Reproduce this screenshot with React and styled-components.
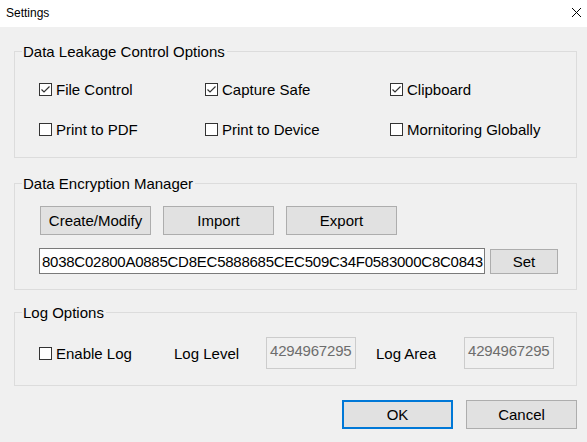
import React from "react";
import styled, { createGlobalStyle } from "styled-components";

const Global = createGlobalStyle`
  html, body { margin: 0; padding: 0; background: #f0f0f0; }
  body { font-family: "Liberation Sans", Arial, sans-serif; }
  * { box-sizing: border-box; }
`;

const Window = styled.div`
  width: 587px;
  height: 442px;
  background: #f0f0f0;
  display: flex;
  flex-direction: column;
  font-family: "Liberation Sans", Arial, sans-serif;
  font-size: 15px;
  color: #000;
  overflow: hidden;
`;

const TitleBar = styled.div`
  height: 27px;
  background: #fff;
  display: flex;
  align-items: center;
  justify-content: space-between;
  padding: 0 4px 1px 6px;
  font-size: 12px;
`;

const Body = styled.div`
  display: flex;
  flex-direction: column;
  padding: 16px 10px 0 14px;
`;

const Group = styled.fieldset`
  margin: ${(p) => p.$mt || 0}px 0 0 0;
  padding: ${(p) => p.$pt}px 0 ${(p) => p.$pb}px 24px;
  border: 1px solid #dcdcdc;
  min-width: 0;
`;

const Legend = styled.legend`
  padding: 0 2px 0 1px;
  margin-left: -17px;
  line-height: 17px;
  font-size: 15px;
`;

const OptionGrid = styled.div`
  display: grid;
  grid-template-columns: 166px 185px auto;
  row-gap: 20px;
`;

const Check = styled.label`
  display: flex;
  align-items: center;
  gap: 4px;
  height: 20px;
  white-space: nowrap;
`;

const Box = styled.span`
  width: 13px;
  height: 13px;
  border: 1px solid #333;
  background: #fff;
  display: inline-flex;
  flex: none;
`;

const CheckBox = ({ checked, children }) => (
  <Check>
    <Box>
      {checked && (
        <svg width="11" height="11" viewBox="0 0 11 11">
          <polyline points="1.5,5.5 4,8 9.5,2.5" fill="none" stroke="#333" strokeWidth="1.2" />
        </svg>
      )}
    </Box>
    {children}
  </Check>
);

const ButtonRow = styled.div`
  display: flex;
  gap: 12px;
  padding-left: 1px;
`;

const Button = styled.button`
  width: ${(p) => p.$w || 111}px;
  height: ${(p) => p.$h || 29}px;
  background: #e1e1e1;
  border: ${(p) => (p.$default ? "2px solid #0078d7" : "1px solid #adadad")};
  font-family: "Liberation Sans", Arial, sans-serif;
  font-size: 15px;
  color: #000;
  padding: 0;
  margin: 0;
`;

const KeyRow = styled.div`
  display: flex;
  align-items: center;
  gap: 5px;
  margin-top: 13px;
`;

const KeyInput = styled.div`
  width: 446px;
  height: 26px;
  border: 1px solid #7a7a7a;
  background: #fff;
  padding: 0 0 0 2px;
  display: flex;
  align-items: center;
  white-space: nowrap;
  overflow: hidden;
  font-size: 15px;
  letter-spacing: -0.25px;
`;

const LogRow = styled.div`
  display: flex;
  align-items: center;
  height: 32px;
`;

const Label = styled.span`
  width: ${(p) => p.$w}px;
  flex: none;
`;

const NumBox = styled.div`
  width: 90px;
  height: 32px;
  border: 1px solid #cccccc;
  background: #f0f0f0;
  color: #6d6d6d;
  padding: 4px 0 0 3px;
  font-size: 15px;
  letter-spacing: -0.2px;
  flex: none;
`;

const Footer = styled.div`
  display: flex;
  justify-content: flex-end;
  gap: 13px;
  margin-top: 14px;
`;

export default function App() {
  return (
    <Window>
      <Global />
      <TitleBar>
        <span>Settings</span>
        <svg width="12" height="12" viewBox="0 0 12 12">
          <path d="M1 1 L10 10 M10 1 L1 10" stroke="#000" strokeWidth="1" />
        </svg>
      </TitleBar>
      <Body>
        <Group $pt={19} $pb={18}>
          <Legend>Data Leakage Control Options</Legend>
          <OptionGrid>
            <CheckBox checked>File Control</CheckBox>
            <CheckBox checked>Capture Safe</CheckBox>
            <CheckBox checked>Clipboard</CheckBox>
            <CheckBox>Print to PDF</CheckBox>
            <CheckBox>Print to Device</CheckBox>
            <CheckBox>Mornitoring Globally</CheckBox>
          </OptionGrid>
        </Group>
        <Group $mt={17} $pt={14} $pb={15}>
          <Legend>Data Encryption Manager</Legend>
          <ButtonRow>
            <Button>Create/Modify</Button>
            <Button>Import</Button>
            <Button>Export</Button>
          </ButtonRow>
          <KeyRow>
            <KeyInput>8038C02800A0885CD8EC5888685CEC509C34F0583000C8C0843</KeyInput>
            <Button $w={68} $h={25}>Set</Button>
          </KeyRow>
        </Group>
        <Group $mt={14} $pt={16} $pb={16}>
          <Legend>Log Options</Legend>
          <LogRow>
            <Label $w={135}>
              <CheckBox>Enable Log</CheckBox>
            </Label>
            <Label $w={92}>Log Level</Label>
            <NumBox>4294967295</NumBox>
            <Label $w={20} />
            <Label $w={88}>Log Area</Label>
            <NumBox>4294967295</NumBox>
          </LogRow>
        </Group>
        <Footer>
          <Button $default>OK</Button>
          <Button>Cancel</Button>
        </Footer>
      </Body>
    </Window>
  );
}
